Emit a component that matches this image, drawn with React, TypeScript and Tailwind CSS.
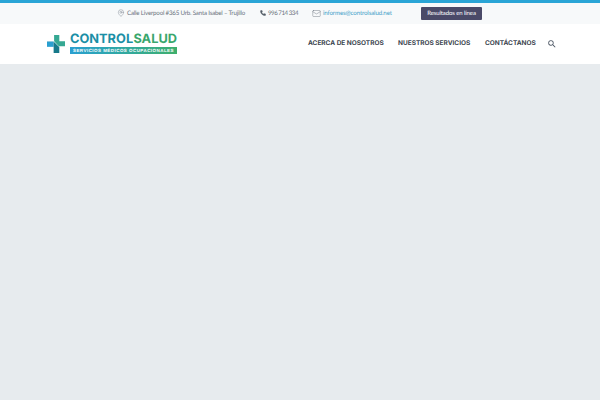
import React from 'react';
import { MapPin, Phone, Mail } from 'lucide-react';

function Logo() {
  return (
    <div className="flex items-center gap-[5px]">
      <svg width="18" height="18" viewBox="0 0 19 19" className="shrink-0">
        <path d="M7.500 0H13v6.500H19V12h-6.500L7.500 6.500z" fill="#35a893" />
        <path d="M0 7.500h7.500V19H13v-6.500H12L7 7H0z" fill="#1d7f94" />
        <path d="M0 7h7v5.500H0z" fill="#2a9fd0" />
        <path d="M7 7l5.500 5.500V19H7z" fill="#17798a" />
      </svg>
      <div className="flex flex-col">
        <div className="flex justify-between text-[12.800px] leading-[12px] font-bold font-['Inter',sans-serif]">
          <span className="text-[#1b8fa6]">CONTROL</span>
          <span className="text-[#3aa76d]">SALUD</span>
        </div>
        <div className="mt-[1.500px] flex h-[7px] w-[107px] items-center justify-center bg-gradient-to-r from-[#2a9fd0] to-[#3fae6b] text-[4.500px] leading-[7px] font-bold tracking-[0.45px] whitespace-nowrap text-white font-['Liberation_Sans',sans-serif]">
          SERVICIOS MÉDICOS OCUPACIONALES
        </div>
      </div>
    </div>
  );
}

export default function App() {
  return (
    <div className="flex min-h-[400px] flex-col bg-[#e7ebee] font-['Lato',sans-serif] [text-rendering:geometricPrecision]">
      <div className="flex h-[24px] items-center border-t-[3px] border-[#2aa5d6] bg-[#f7f9fa] pl-[117px] text-[6.200px] text-[#6b7480]">
        <div className="flex w-[127px] items-center gap-[2px] whitespace-nowrap tracking-[-0.2px]">
          <MapPin size={8} strokeWidth={1.2} className="shrink-0 text-[#6b7480]" />
          <span>Calle Liverpool #365 Urb. Santa Isabel – Trujillo</span>
        </div>
        <div className="ml-[16px] flex w-[38px] items-center gap-[2px] whitespace-nowrap tracking-[-0.5px]">
          <Phone size={6} strokeWidth={2} fill="currentColor" className="shrink-0 text-[#555e68]" />
          <span>996 714 334</span>
        </div>
        <div className="ml-[14px] flex w-[79px] items-center gap-[2px] whitespace-nowrap tracking-[-0.15px]">
          <Mail size={9} strokeWidth={1.2} className="shrink-0 text-[#6b7480]" />
          <span className="text-[#3f9fc9]">informes@controlsalud.net</span>
        </div>
        <div className="ml-[30px] flex h-[13px] w-[61px] items-center justify-center rounded-[1px] bg-[#4a4a68] text-[6px] tracking-[-0.1px] whitespace-nowrap text-white">
          Resultados en línea
        </div>
      </div>
      <div className="flex h-[39.500px] items-center justify-between bg-white pr-[43px] pl-[47px]">
        <Logo />
        <div className="flex items-center font-['Inter',sans-serif] text-[6.500px] font-bold whitespace-nowrap text-[#3d4650]">
          <span className="w-[75px]">ACERCA DE NOSOTROS</span>
          <span className="ml-[15px] w-[71px]">NUESTROS SERVICIOS</span>
          <span className="ml-[16px] w-[49px]">CONTÁCTANOS</span>
          <svg width="10" height="10" viewBox="0 0 24 24" fill="#4b5563" className="ml-[13px] shrink-0">
            <path d="M15.500 14h-.79l-.28-.27A6.471 6.471 0 0 0 16 9.500 6.500 6.500 0 1 0 9.500 16c1.610 0 3.090-.59 4.230-1.570l.27.28v.79l5 4.990L20.490 19l-4.990-5zm-6 0C7.010 14 5 11.990 5 9.500S7.010 5 9.500 5 14 7.010 14 9.500 11.990 14 9.500 14z" />
          </svg>
        </div>
      </div>
    </div>
  );
}
